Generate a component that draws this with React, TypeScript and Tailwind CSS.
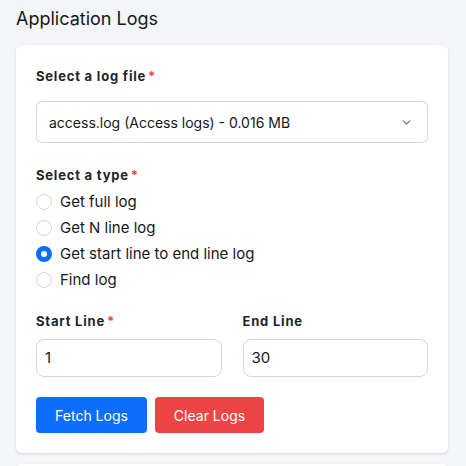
import React from "react";

const font = { fontFamily: "Inter, 'Noto Sans', sans-serif" };

function Label({ children, req }: { children: React.ReactNode; req?: boolean }) {
  return (
    <div className="text-[13px] font-bold leading-[18px] text-[#212529] tracking-[0.8px]">
      {children}
      {req && <span className="text-[#ef4444] ml-[2px]">*</span>}
    </div>
  );
}

function Radio({ label, checked }: { label: string; checked?: boolean }) {
  return (
    <div className="flex items-center h-[26px]">
      {checked ? (
        <span className="w-[16px] h-[16px] rounded-full bg-[#0d6efd] flex items-center justify-center">
          <span className="w-[6px] h-[6px] rounded-full bg-white" />
        </span>
      ) : (
        <span className="w-[16px] h-[16px] rounded-full border border-[#d4d6dc] bg-white" />
      )}
      <span className="ml-[8px] text-[15px] text-[#15171c]">{label}</span>
    </div>
  );
}

export default function App() {
  return (
    <div className="w-[466px] h-[466px] overflow-hidden bg-[#f4f5f9] pl-[16px] pr-[18px]" style={font}>
      <div className="pt-[7px] h-[45px] text-[18px] text-[#15171c] leading-[24px]">Application Logs</div>
      <div className="bg-white rounded-[6px] shadow-[0_1px_3px_rgba(0,0,0,0.12)] px-[20px] pt-[22px] pb-[20px]">
        <Label req>Select a log file</Label>
        <div className="mt-[16px] h-[42px] border border-[#d4d6dc] rounded-[6px] flex items-center justify-between pl-[12px] pr-[14px] text-[14px] text-[#15171c]">
          <span>access.log (Access logs) - 0.016 MB</span>
          <svg width="13" height="13" viewBox="0 0 24 24" fill="none" stroke="#777c85" strokeWidth="2.5" strokeLinecap="round" strokeLinejoin="round">
            <path d="M6 9l6 6 6-6" />
          </svg>
        </div>
        <div className="mt-[23px]">
          <Label req>Select a type</Label>
        </div>
        <div className="mt-[5px] flex flex-col">
          <Radio label="Get full log" />
          <Radio label="Get N line log" />
          <Radio label="Get start line to end line log" checked />
          <Radio label="Find log" />
        </div>
        <div className="mt-[19px] grid grid-cols-2 gap-[21px]">
          <div>
            <Label req>Start Line</Label>
            <div className="mt-[9px] h-[38px] border border-[#d4d6dc] rounded-[8px] flex items-center px-[8px] text-[15px] text-[#15171c]">1</div>
          </div>
          <div>
            <Label>End Line</Label>
            <div className="mt-[9px] h-[38px] border border-[#d4d6dc] rounded-[8px] flex items-center px-[8px] text-[15px] text-[#15171c]">30</div>
          </div>
        </div>
        <div className="mt-[20px] flex gap-[8px]">
          <button className="w-[111px] h-[36px] rounded-[4px] bg-[#0d6efd] text-white text-[14px]">Fetch Logs</button>
          <button className="w-[109px] h-[36px] rounded-[4px] bg-[#ef4444] text-white text-[14px]">Clear Logs</button>
        </div>
      </div>
      <div className="mt-[11px] bg-white rounded-[6px] h-[40px] shadow-[0_1px_3px_rgba(0,0,0,0.12)]" />
    </div>
  );
}
